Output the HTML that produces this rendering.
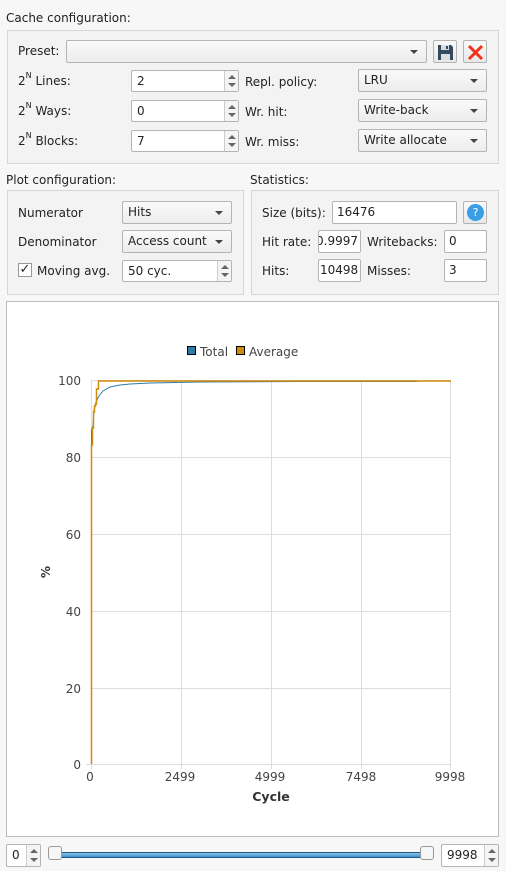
<!DOCTYPE html>
<html><head><meta charset="utf-8"><style>
*{box-sizing:border-box;margin:0;padding:0}
body{width:506px;height:871px;background:#f7f7f7;font-family:"DejaVu Sans","Liberation Sans",sans-serif;font-size:12px;color:#222;position:relative;overflow:hidden}
.a{position:absolute}
.t{position:absolute;white-space:nowrap;line-height:14px}
.grp{position:absolute;border:1px solid #d6d6d6;background:#f3f3f3}
.cb{position:absolute;border:1px solid #b4b4b4;border-radius:2px;background:linear-gradient(#fafafa,#ececec);padding-left:5px;line-height:20px;white-space:nowrap}
.cb:after{content:"";position:absolute;right:8px;top:9px;border-left:4px solid transparent;border-right:4px solid transparent;border-top:4px solid #444}
.sp{position:absolute;border:1px solid #b4b4b4;border-radius:2px;background:#fff;padding-left:5px;line-height:20px;white-space:nowrap}
.sp .ar{position:absolute;right:0;top:0;bottom:0;width:14px;border-left:1px solid #ccc;background:#f4f4f4}
.sp .ar:before{content:"";position:absolute;left:3px;top:4px;border-left:4px solid transparent;border-right:4px solid transparent;border-bottom:4px solid #666}
.sp .ar:after{content:"";position:absolute;left:3px;bottom:4px;border-left:4px solid transparent;border-right:4px solid transparent;border-top:4px solid #666}
.le{position:absolute;border:1px solid #b4b4b4;border-radius:2px;background:#fff;padding-left:4px;line-height:20px;white-space:nowrap;overflow:hidden}
.btn{position:absolute;border:1px solid #b4b4b4;border-radius:2px;background:linear-gradient(#fafafa,#e8e8e8)}
sup{font-size:8px;vertical-align:top;line-height:8px;position:relative;top:-2px}
</style></head><body>
<div class="t" style="left:6px;top:11px">Cache configuration:</div>
<div class="grp" style="left:7px;top:30px;width:492px;height:134px"></div>
<div class="t" style="left:18px;top:44px">Preset:</div>
<div class="cb" style="left:66px;top:40px;width:361px;height:23px"></div>
<div class="btn" style="left:433px;top:40px;width:24px;height:23px">
<svg class="a" style="left:3px;top:3px" width="17" height="17" viewBox="0 0 17 17"><path d="M1 1h13l2 2v13H1z" fill="#34495e"/><rect x="4" y="1" width="8" height="5" fill="#d8dde2"/><rect x="9" y="2" width="2" height="3" fill="#34495e"/><rect x="4" y="10" width="9" height="6" fill="#d8dde2"/></svg></div>
<div class="btn" style="left:463px;top:40px;width:24px;height:23px">
<svg class="a" style="left:3px;top:3px" width="17" height="17" viewBox="0 0 17 17"><path d="M2 2L15 15M15 2L2 15" stroke="#f0341b" stroke-width="3"/></svg></div>

<div class="t" style="left:18px;top:74px">2<sup>N</sup> Lines:</div>
<div class="sp" style="left:131px;top:70px;width:108px;height:22px">2<div class="ar"></div></div>
<div class="t" style="left:245px;top:75px">Repl. policy:</div>
<div class="cb" style="left:358px;top:69px;width:129px;height:23px">LRU</div>

<div class="t" style="left:18px;top:104px">2<sup>N</sup> Ways:</div>
<div class="sp" style="left:131px;top:100px;width:108px;height:22px">0<div class="ar"></div></div>
<div class="t" style="left:245px;top:105px">Wr. hit:</div>
<div class="cb" style="left:358px;top:99px;width:129px;height:23px">Write-back</div>

<div class="t" style="left:18px;top:134px">2<sup>N</sup> Blocks:</div>
<div class="sp" style="left:131px;top:130px;width:108px;height:22px">7<div class="ar"></div></div>
<div class="t" style="left:245px;top:135px">Wr. miss:</div>
<div class="cb" style="left:358px;top:129px;width:129px;height:23px">Write allocate</div>

<div class="t" style="left:6px;top:173px">Plot configuration:</div>
<div class="t" style="left:250px;top:173px">Statistics:</div>
<div class="grp" style="left:7px;top:190px;width:237px;height:105px"></div>
<div class="grp" style="left:251px;top:190px;width:248px;height:105px"></div>

<div class="t" style="left:18px;top:206px">Numerator</div>
<div class="cb" style="left:122px;top:201px;width:110px;height:23px">Hits</div>
<div class="t" style="left:18px;top:235px">Denominator</div>
<div class="cb" style="left:122px;top:230px;width:110px;height:23px">Access count</div>
<div class="a" style="left:18px;top:263px;width:14px;height:14px;border:1px solid #999;background:#fff;font-size:13px;line-height:12px;text-align:center">✓</div>
<div class="t" style="left:37px;top:264px">Moving avg.</div>
<div class="sp" style="left:122px;top:260px;width:110px;height:22px">50 cyc.<div class="ar"></div></div>

<div class="t" style="left:262px;top:206px">Size (bits):</div>
<div class="le" style="left:332px;top:201px;width:125px;height:23px">16476</div>
<div class="btn" style="left:463px;top:201px;width:24px;height:23px"><div class="a" style="left:3px;top:2px;width:17px;height:17px;border-radius:50%;background:#3a9ee4;color:#fff;font-size:11px;text-align:center;line-height:17px">?</div></div>
<div class="t" style="left:262px;top:235px">Hit rate:</div>
<div class="le" style="left:318px;top:230px;width:43px;height:23px;padding-left:0;text-indent:-3px">0.9997</div>
<div class="t" style="left:367px;top:235px">Writebacks:</div>
<div class="le" style="left:444px;top:230px;width:43px;height:23px">0</div>
<div class="t" style="left:262px;top:264px">Hits:</div>
<div class="le" style="left:318px;top:259px;width:43px;height:23px;padding-left:1px">10498</div>
<div class="t" style="left:367px;top:264px">Misses:</div>
<div class="le" style="left:444px;top:259px;width:43px;height:23px">3</div>

<div class="a" style="left:6px;top:301px;width:493px;height:536px;background:#fff;border:1px solid #bbb"></div>
<svg class="a" style="left:0;top:0" width="506" height="871" viewBox="0 0 506 871">
<g stroke="#ddd" stroke-width="1">
<line x1="91" y1="380.5" x2="451" y2="380.5"/><line x1="91" y1="457.5" x2="451" y2="457.5"/><line x1="91" y1="534.5" x2="451" y2="534.5"/><line x1="91" y1="611.5" x2="451" y2="611.5"/><line x1="91" y1="688.5" x2="451" y2="688.5"/><line x1="86" y1="764.5" x2="451" y2="764.5"/>
<line x1="91.5" y1="380" x2="91.5" y2="769"/><line x1="181.5" y1="380" x2="181.5" y2="769"/><line x1="271.5" y1="380" x2="271.5" y2="769"/><line x1="361.5" y1="380" x2="361.5" y2="769"/><line x1="450.5" y1="380" x2="450.5" y2="769"/>
</g>
<path d="M91.5 764V430L93 426L94 410L96 402L99 396L103 391L110 387L120 385L130 384L150 383L200 382L300 381.5L417 381.5" fill="none" stroke="#2f7ba6" stroke-width="1"/>
<path d="M91.5 764V445H92.5V428H93.5V412H94.5V406H95.5V404H96.5V389H98.5V381H451" fill="none" stroke="#d08a0c" stroke-width="1.5"/>
<g font-family="DejaVu Sans,sans-serif" font-size="12" fill="#444" text-anchor="end">
<text x="81" y="385">100</text><text x="81" y="462">80</text><text x="81" y="539">60</text><text x="81" y="616">40</text><text x="81" y="693">20</text><text x="81" y="769">0</text>
</g>
<g font-family="DejaVu Sans,sans-serif" font-size="12" fill="#444" text-anchor="middle">
<text x="90" y="781">0</text><text x="180" y="781">2499</text><text x="270" y="781">4999</text><text x="361" y="781">7498</text><text x="450" y="781">9998</text>
<text x="271" y="801" font-weight="bold" font-size="12.5" fill="#333">Cycle</text>
<text x="50" y="572" transform="rotate(-90 50 572)" fill="#333" font-weight="bold" font-size="12">%</text>
</g>
<rect x="187.5" y="346.5" width="8" height="8" fill="#2f7ba6" stroke="#000"/>
<text x="200" y="356" font-family="DejaVu Sans,sans-serif" font-size="12" fill="#444">Total</text>
<rect x="236.5" y="346.5" width="8" height="8" fill="#d08a0c" stroke="#000"/>
<text x="249" y="356" font-family="DejaVu Sans,sans-serif" font-size="12" fill="#444">Average</text>
</svg>

<div class="sp" style="left:6px;top:844px;width:35px;height:23px">0<div class="ar"></div></div>
<div class="a" style="left:52px;top:852px;width:380px;height:6px;background:linear-gradient(#8cc4e8,#3a8fcc);border:1px solid #1f5a85"></div>
<div class="a" style="left:48px;top:846px;width:14px;height:14px;border:1px solid #999;border-radius:3px;background:#f6f6f6"></div>
<div class="a" style="left:420px;top:846px;width:14px;height:14px;border:1px solid #999;border-radius:3px;background:#f6f6f6"></div>
<div class="sp" style="left:441px;top:844px;width:58px;height:23px">9998<div class="ar"></div></div>
</body></html>
